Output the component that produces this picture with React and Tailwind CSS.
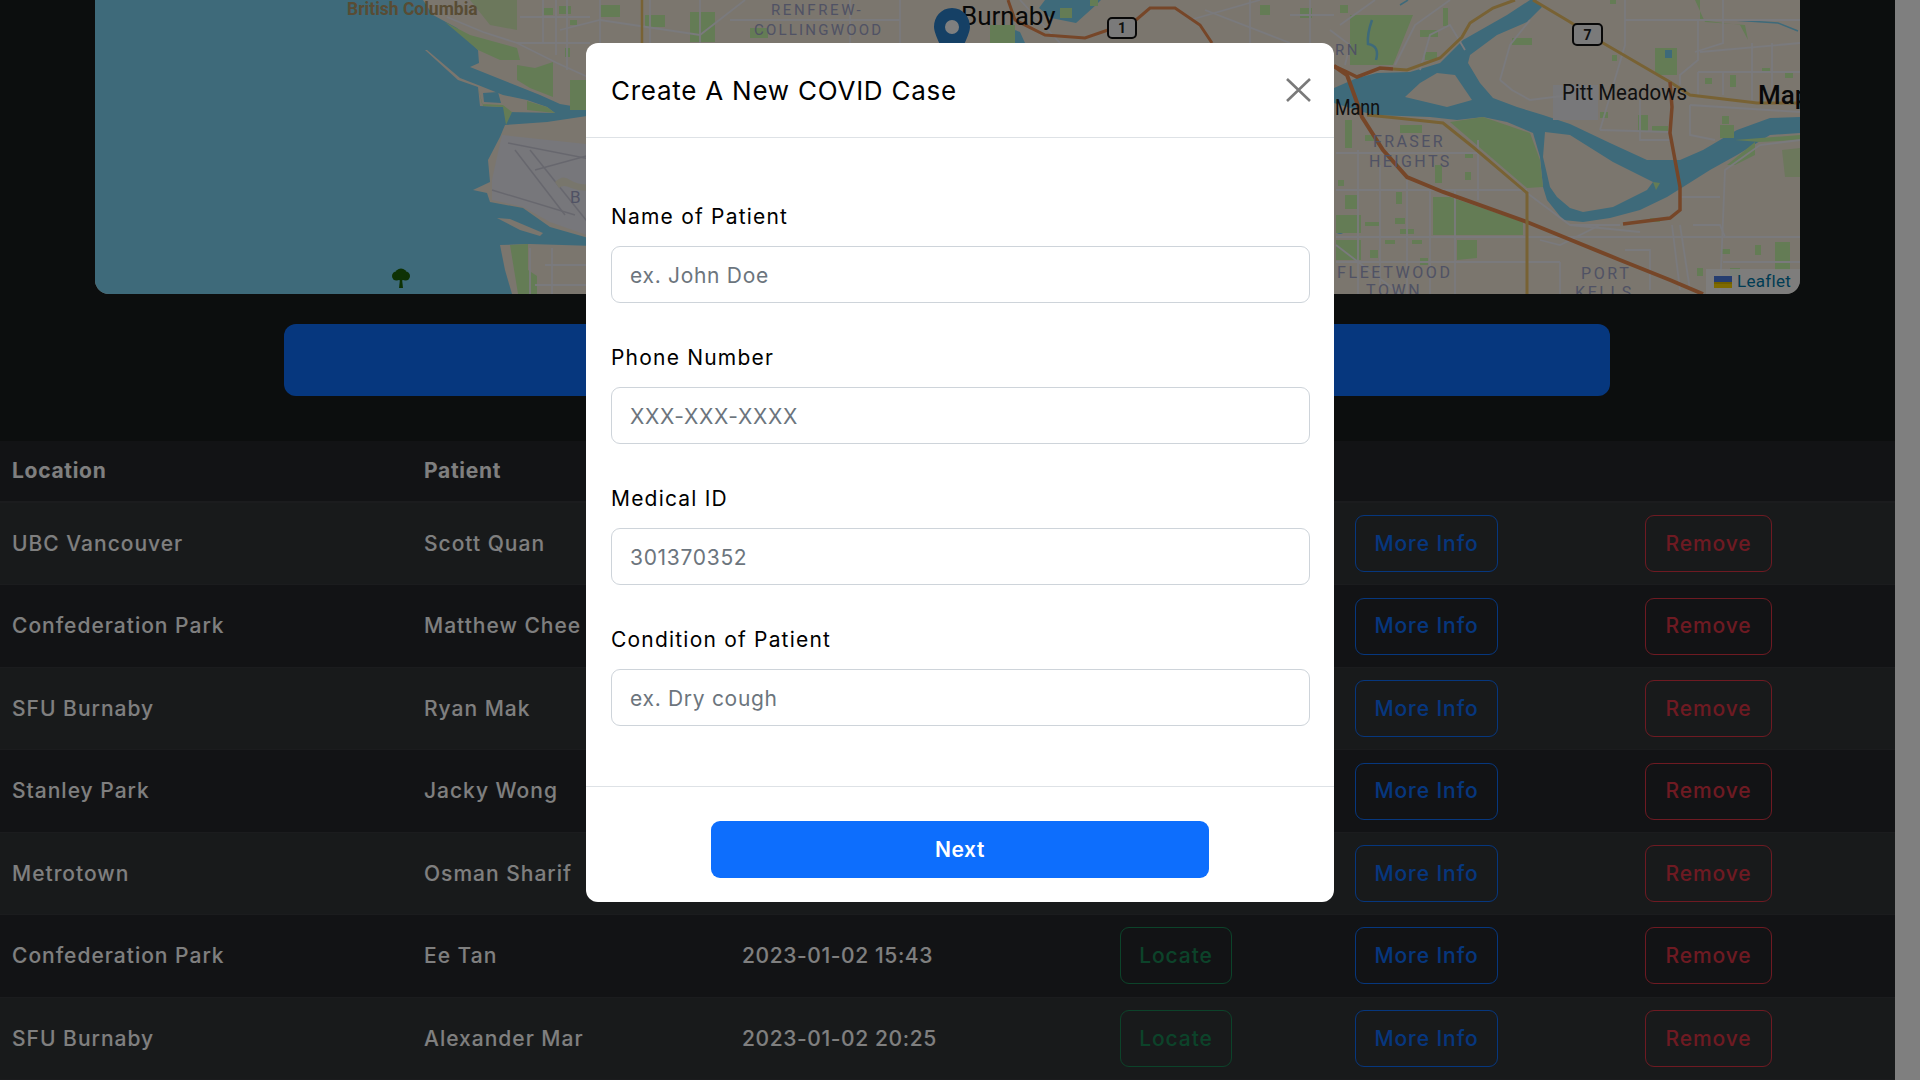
import React from "react";

const rows = [
    { location: "UBC Vancouver", patient: "Scott Quan" },
    { location: "Confederation Park", patient: "Matthew Chee" },
    { location: "SFU Burnaby", patient: "Ryan Mak" },
    { location: "Stanley Park", patient: "Jacky Wong" },
    { location: "Metrotown", patient: "Osman Sharif" },
    { location: "Confederation Park", patient: "Ee Tan", date: "2023-01-02 15:43" },
    { location: "SFU Burnaby", patient: "Alexander Mar", date: "2023-01-02 20:25" },
];

const fields = [
    { label: "Name of Patient", placeholder: "ex. John Doe" },
    { label: "Phone Number", placeholder: "XXX-XXX-XXXX" },
    { label: "Medical ID", placeholder: "301370352" },
    { label: "Condition of Patient", placeholder: "ex. Dry cough" },
];

const LAND = "#f6ecdd";
const WATER = "#7cd4f4";
const PARK = "#c8f8aa";
const ROAD = "#f4f4fa";
const GOLD = "#f0c468";
const ORANGE = "#ec8c50";
const LABEL = "#a0a4c8";

// [x, y, w, h] small parks
const parks = [
    [543, 8, 10, 7], [559, 6, 12, 8], [565, 48, 5, 9], [1340, 5, 8, 8], [1420, 30, 18, 7], [1425, 52, 12, 8],
    [1443, 8, 5, 18], [1512, 38, 20, 7], [1338, 180, 6, 6], [1345, 195, 12, 14], [1336, 215, 25, 18],
    [1336, 240, 25, 20], [1365, 222, 14, 4], [1396, 192, 6, 12], [1395, 218, 10, 6], [1400, 229, 14, 5],
    [1370, 250, 8, 8], [1385, 240, 10, 4], [1412, 240, 10, 4], [1420, 258, 8, 7], [1365, 135, 12, 6],
    [1400, 125, 22, 8], [1345, 120, 7, 28], [1435, 165, 7, 18], [1465, 152, 8, 6], [1465, 172, 6, 8],
    [1600, 112, 8, 6], [1638, 115, 10, 16], [1652, 126, 16, 5], [1705, 78, 7, 6], [1730, 75, 6, 12],
    [1722, 116, 7, 8], [1720, 125, 14, 13], [1650, 218, 10, 4], [1722, 249, 8, 5], [1755, 245, 6, 10],
    [1730, 268, 10, 8], [1697, 268, 6, 8], [1785, 72, 8, 6], [1762, 68, 8, 3], [1612, 55, 5, 6], [1610, 0, 6, 4],
    [570, 20, 7, 5], [600, 5, 20, 12], [645, 15, 20, 12], [690, 12, 25, 30], [750, 28, 18, 10],
    [990, 25, 25, 18], [1060, 8, 12, 10], [1090, 0, 8, 6], [1260, 5, 10, 10], [1300, 8, 12, 10],
];

// map roads, each one a list of points
const streets = [
    "447,17 483,32 517,43 557,63 590,78",
    "543,0 543,43", "556,0 556,55", "567,0 567,70", "520,17 590,17", "517,43 590,43",
    "530,248 530,294", "552,248 552,294", "545,265 587,265", "535,285 587,285",
    "1358,150 1358,294", "1380,165 1380,294", "1407,180 1407,294", "1430,190 1430,294", "1455,190 1455,294", "1478,140 1478,200",
    "1336,153 1478,153", "1336,190 1527,190", "1336,237 1800,237", "1336,262 1560,262", "1336,245 1400,294",
    "1340,25 1375,0", "1395,65 1415,25 1450,0", "1420,70 1430,35 1450,25 1465,50", "1330,30 1350,45 1345,65",
    "1500,80 1510,45 1530,20", "1500,80 1512,90 1530,100 1570,95", "1527,193 1570,225 1620,225", "1540,240 1560,245 1600,225",
    "1625,0 1625,45 1600,130", "1625,20 1800,20", "1698,20 1698,60 1680,75 1680,85", "1723,0 1723,43 1695,52",
    "1700,52 1800,43", "1698,72 1800,72", "1698,72 1698,95", "1723,72 1723,95", "1752,43 1752,100", "1772,43 1772,100",
    "1690,105 1800,112", "1690,105 1690,135 1715,140", "1640,100 1640,140 1670,140", "1600,130 1670,132",
    "1800,140 1760,145 1725,170 1720,294", "1680,197 1720,197", "1672,225 1680,290", "1680,225 1690,290", "1625,250 1650,250 1650,290",
    "1693,225 1720,225 1725,237", "1570,225 1640,232", "1560,262 1560,294", "1723,262 1800,262",
    "560,30 600,20 700,35 745,0", "600,0 600,43", "650,0 650,43", "700,0 700,43", "730,20 900,20", "850,0 850,43", "900,0 900,43",
    "1020,0 1060,43", "1190,20 1260,0", "1205,10 1290,43", "1250,0 1250,43", "1290,15 1334,15", "1310,0 1310,43",
];

const lines = [
    { stroke: ORANGE, width: 3.5, points: "1334,66 1347,72 1357,77 1380,68 1393,69" },
    { stroke: GOLD, width: 3, points: "1393,69 1407,70 1440,58 1462,37 1470,23 1493,8 1515,0" },
    { stroke: ORANGE, width: 4, points: "1334,66 1347,75 1355,97 1362,117 1383,150 1407,177 1443,192 1527,222 1620,260 1670,280 1703,294" },
    { stroke: GOLD, width: 3, points: "1367,115 1397,118 1443,123 1473,147 1527,193 1527,294" },
    { stroke: GOLD, width: 3, points: "1533,0 1570,22 1603,43 1670,82 1690,95 1757,103 1800,103" },
    { stroke: ORANGE, width: 3.5, points: "1670,82 1672,107 1670,133 1680,187 1680,210 1670,218 1623,224" },
    { stroke: GOLD, width: 2.5, points: "642,0 642,43" },
    { stroke: ORANGE, width: 3, points: "1008,0 1015,20 1045,35 1085,38 1108,30" },
    { stroke: ORANGE, width: 3, points: "1136,20 1150,8 1175,8 1200,25 1212,43" },
];

const labels = [
    { x: 771, y: 15, text: "RENFREW-", size: 15, spacing: 2.6 },
    { x: 754, y: 35, text: "COLLINGWOOD", size: 15, spacing: 2.2 },
    { x: 1335, y: 55, text: "RN", size: 15, spacing: 2.5 },
    { x: 1373, y: 147, text: "FRASER", size: 16, spacing: 2.4 },
    { x: 1369, y: 167, text: "HEIGHTS", size: 16, spacing: 2.4 },
    { x: 1337, y: 278, text: "FLEETWOOD", size: 16, spacing: 2.6 },
    { x: 1366, y: 296, text: "TOWN", size: 16, spacing: 2.6 },
    { x: 1581, y: 279, text: "PORT", size: 16, spacing: 2.6 },
    { x: 1575, y: 298, text: "KELLS", size: 16, spacing: 2.6 },
    { x: 570, y: 203, text: "B", size: 17, spacing: 0 },
];

function Shield({ x, y, w, h, text }) {
    return (
        <g>
            <rect x={x} y={y} width={w} height={h} rx="4" fill="#f4f4f4" stroke="#111" strokeWidth="2" />
            <text x={x + w / 2} y={y + h / 2 + 5} textAnchor="middle" fontSize="14" fontWeight="700" fontFamily="Roboto, sans-serif" fill="#222">{text}</text>
        </g>
    );
}

function MapView() {
    return (
        <div className="relative ml-[95px] h-[294px] w-[1705px] overflow-hidden rounded-b-[14px] bg-[#f6ecdd]">
            <svg viewBox="95 0 1705 294" width="1705" height="294" className="block">
                {/* sea */}
                <polygon fill={WATER} points="95,0 423,0 433,15 457,28 478,50 479,63 470,67 490,75 515,85 540,95 560,104 595,110 595,294 95,294" />
                {/* mainland parks */}
                <polygon fill={PARK} points="445,22 470,35 517,48 520,60 500,60 478,50" />
                <polygon fill={PARK} points="517,65 535,68 553,62 553,97 530,88 517,80" />
                <rect x="570" y="80" width="20" height="30" fill={PARK} />
                <polygon fill="#d8f0b8" points="470,0 517,0 517,30 490,25" />
                {/* sea island and the arms */}
                <polygon fill={LAND} points="425,50 427,50 460,78 478,85 503,95 527,100 547,107 555,113 507,112 503,107 480,106 478,87 458,80" />
                <polygon fill={PARK} points="527,101 547,107 555,113 527,110" />
                <polygon fill={PARK} points="478,87 483,106 503,107 506,125 512,112 503,105 482,104" />
                <polygon fill={WATER} points="483,93 498,92 501,103 484,102" />
                <polygon fill={LAND} points="505,125 547,122 587,116 595,116 595,240 585,237 550,227 523,208 490,202 487,193 473,190 490,182 488,160 500,137" />
                <polygon fill="#eeeef6" points="502,135 595,145 595,238 550,222 523,207 492,200 492,180 497,157" />
                <g fill="none" stroke="#cfcfdc" strokeWidth="1.5">
                    <polyline points="508,143 595,160" />
                    <polyline points="515,150 565,215" />
                    <polyline points="530,150 590,225" />
                    <polyline points="492,190 575,215" />
                    <polyline points="535,170 590,155" />
                </g>
                <path d="M555,182 q8,-8 15,-2 q10,6 25,4 v6 q-14,2 -24,-2 q-8,-4 -12,0 z" fill="#f0ecd8" />
                <polygon fill={LAND} points="497,218 510,219 543,233 540,236 520,230" />
                <polygon fill={LAND} points="500,245 530,244 595,246 595,294 512,294 505,270" />
                <polygon fill={PARK} points="510,245 528,244 528,270 537,276 537,294 518,294" />
                {/* fraser river */}
                <polygon fill={WATER} points="1334,88 1357,78 1377,73 1410,72 1440,63 1463,40 1507,15 1530,0 1536,0 1542,7 1527,22 1497,35 1470,55 1468,63 1480,83 1493,98 1517,107 1543,115 1570,124 1610,143 1647,160 1680,160 1703,150 1737,130 1770,118 1800,117 1800,133 1770,135 1737,155 1710,170 1683,187 1667,197 1640,210 1610,218 1583,222 1563,220 1547,200 1543,187 1540,157 1533,133 1507,122 1483,117 1457,120 1430,117 1373,115 1334,103" />
                <polygon fill={LAND} points="1437,73 1455,75 1472,100 1447,107 1405,97 1420,83" />
                <polygon fill={LAND} points="1545,132 1570,135 1613,162 1653,182 1647,190 1613,207 1583,212 1570,208 1557,197 1550,187 1543,157" />
                <polygon fill={PARK} points="1653,182 1660,183 1656,190" />
                {/* parks on the east side */}
                <polygon fill={PARK} points="1350,15 1413,15 1393,65 1350,65" />
                <polygon fill={PARK} points="1450,122 1483,117 1530,133 1540,160 1543,187 1527,188" />
                <polygon fill={PARK} points="1433,197 1450,197 1523,222 1523,235 1433,235" />
                <polygon fill={PARK} points="1457,240 1477,240 1477,258 1457,260" />
                <rect x="1655" y="48" width="22" height="27" fill={PARK} />
                <polygon fill={PARK} points="1727,165 1755,142 1755,155 1735,165" />
                <rect x="1775" y="242" width="15" height="28" fill={PARK} />
                <polygon fill="#d8f0b8" points="1782,150 1800,148 1800,177 1785,177" />
                <polygon fill={PARK} points="1735,140 1800,135 1800,140 1760,142" />
                <polygon fill={PARK} points="1695,0 1700,0 1700,20 1740,25 1748,40 1745,25 1705,22" />
                <rect x="1553" y="85" width="45" height="35" fill="#f0f0f4" />
                <path d="M1372,20 q-5,14 -4,24 q12,2 8,16" fill="none" stroke={WATER} strokeWidth="2.5" />
                <path d="M1400,5 l8,-5 M1733,20 l45,3 l20,8" fill="none" stroke={WATER} strokeWidth="1.5" />
                <rect x="1665" y="50" width="7" height="8" fill={WATER} />
                <rect x="1336" y="222" width="8" height="12" rx="4" fill={WATER} />
                <path d="M1005,32 q8,-4 15,0 l5,11 h-26 z" fill={WATER} />
                <path d="M1045,0 l-6,8 l12,10 l25,5 l20,-18 l5,-5 z" fill={WATER} />
                {parks.map(([x, y, w, h]) => (
                    <rect key={`${x}-${y}`} x={x} y={y} width={w} height={h} fill={PARK} />
                ))}
                <g fill="none" stroke={ROAD} strokeWidth="1.8">
                    {streets.map((points) => (
                        <polyline key={points} points={points} />
                    ))}
                </g>
                {lines.map((line) => (
                    <polyline key={line.points} points={line.points} fill="none" stroke={line.stroke} strokeWidth={line.width} />
                ))}
                {labels.map((label) => (
                    <text key={label.text} x={label.x} y={label.y} fontSize={label.size} letterSpacing={label.spacing} fontFamily="Roboto, sans-serif" fill={LABEL}>{label.text}</text>
                ))}
                <text x="347" y="15" fontSize="17.5" fontWeight="700" fontFamily="Roboto, sans-serif" fill="#b09868">British Columbia</text>
                <text x="961" y="25" fontSize="26" fontFamily="Roboto, sans-serif" fill="#111">Burnaby</text>
                <text x="1562" y="100" fontSize="22" textLength="125" lengthAdjust="spacingAndGlyphs" fontFamily="Roboto, sans-serif" fill="#222">Pitt Meadows</text>
                <text x="1335" y="115" fontSize="22" textLength="45" lengthAdjust="spacingAndGlyphs" fontFamily="Roboto, sans-serif" fill="#222">Mann</text>
                <text x="1758" y="104" fontSize="26" fontWeight="500" fontFamily="Roboto, sans-serif" fill="#111">Map</text>
                <Shield x={1108} y={18} w={28} h={20} text="1" />
                <Shield x={1573} y={24} w={29} h={21} text="7" />
                {/* tree */}
                <g fill="#1c6408">
                    <path d="M399,288 l1,-9 h2 l1,9 z" />
                    <circle cx="396.5" cy="276" r="4.5" />
                    <circle cx="405.5" cy="276" r="4.5" />
                    <circle cx="401" cy="274.5" r="6" />
                </g>
                {/* marker */}
                <path d="M952,8 c-11,0 -18,9 -18,19 c0,9 14,32 18,44 c4,-12 18,-35 18,-44 c0,-10 -7,-19 -18,-19 z" fill="#2a81cb" />
                <circle cx="952" cy="27" r="7" fill="#fff" />
            </svg>
            <div className="absolute right-0 bottom-0 flex h-[25px] w-[94px] items-center gap-[5px] bg-white/80 pl-2 text-[17px] text-[#0078a8]">
                <svg width="18" height="12" viewBox="0 0 18 12" className="shrink-0">
                    <rect width="18" height="6" fill="#4c7be1" />
                    <rect y="6" width="18" height="6" fill="#ffd500" />
                    <rect y="6" width="18" height="2" fill="#e0bc00" />
                </svg>
                <span className="font-[Roboto,sans-serif] tracking-[0.3px]">Leaflet</span>
            </div>
        </div>
    );
}

function OutlineButton({ className, children }) {
    return (
        <button type="button" className={`flex h-[57px] items-center justify-center rounded-[9px] border text-[21px] font-medium tracking-[0.9px] ${className}`}>
            {children}
        </button>
    );
}

function CaseRow({ row, striped }) {
    return (
        <div className={`grid h-[82.45px] grid-cols-[412px_318px_378px_235px_290px_262px] items-center border-b border-[#36393d] text-[21px] font-medium tracking-[1px] text-white ${striped ? "bg-[#313437]" : "bg-[#25272b]"}`}>
            <div className="pl-3">{row.location}</div>
            <div className="pl-3">{row.patient}</div>
            <div className="pl-3 tracking-[0.6px]">{row.date}</div>
            <div className="pl-3">
                {row.date && <OutlineButton className="w-[112px] border-[#198754] text-[#198754]">Locate</OutlineButton>}
            </div>
            <div className="pl-3">
                <OutlineButton className="w-[143px] border-[#0d6efd] text-[#0d6efd]">More Info</OutlineButton>
            </div>
            <div className="pl-3">
                <OutlineButton className="w-[127px] border-[#dc3545] text-[#dc3545]">Remove</OutlineButton>
            </div>
        </div>
    );
}

function CaseModal() {
    return (
        <div className="fixed inset-0 flex justify-center bg-black/50 pt-[43px]">
            <div className="flex h-[859px] w-[748px] flex-col rounded-[12px] bg-white text-black">
                <div className="flex h-[95px] shrink-0 items-center justify-between border-b border-[#dee2e6] pr-[23px] pl-[25px]">
                    <h5 className="text-[26px] tracking-[0.75px]">Create A New COVID Case</h5>
                    <button type="button" aria-label="Close">
                        <svg width="25" height="24" viewBox="0 0 25 24" className="block" fill="none" stroke="#7a7a7a" strokeWidth="2.6">
                            <path d="M1 1 L24 23 M24 1 L1 23" />
                        </svg>
                    </button>
                </div>
                <div className="flex-1 pr-[24px] pl-[25px] pt-[62px]">
                    {fields.map((field) => (
                        <div key={field.label} className="mb-[38px]">
                            <label className="mb-3 block h-[34px] text-[21px] leading-[34px] tracking-[1.2px]">{field.label}</label>
                            <input
                                placeholder={field.placeholder}
                                className="block h-[57px] w-full rounded-[9px] border border-[#ced4da] pt-[1px] pl-[18px] text-[21px] tracking-[0.7px] placeholder:text-[#6c757d]"
                            />
                        </div>
                    ))}
                </div>
                <div className="flex h-[116px] shrink-0 justify-center border-t border-[#dee2e6] pt-[34px]">
                    <button type="button" className="h-[57px] w-[498px] rounded-[9px] bg-[#0d6efd] text-[21px] font-semibold tracking-[0.6px] text-white">Next</button>
                </div>
            </div>
        </div>
    );
}

export default function App() {
    return (
        <div className="flex h-screen overflow-hidden bg-white font-[Inter,sans-serif]">
            <div className="w-[1895px] shrink-0 bg-[#181c1c]">
                <MapView />
                <div className="mt-[30px] mb-[45px] ml-[284px] h-[72px] w-[1326px] rounded-[12px] bg-[#0d6efd]" />
                <div className="grid h-[62px] grid-cols-[412px_318px_378px_235px_290px_262px] items-center border-b-2 border-[#36393d] bg-[#25272b] text-[21px] font-bold tracking-[0.7px] text-white">
                    <div className="pl-3">Location</div>
                    <div className="pl-3">Patient</div>
                </div>
                {rows.map((row, i) => (
                    <CaseRow key={row.patient} row={row} striped={i % 2 === 0} />
                ))}
            </div>
            <CaseModal />
        </div>
    );
}
